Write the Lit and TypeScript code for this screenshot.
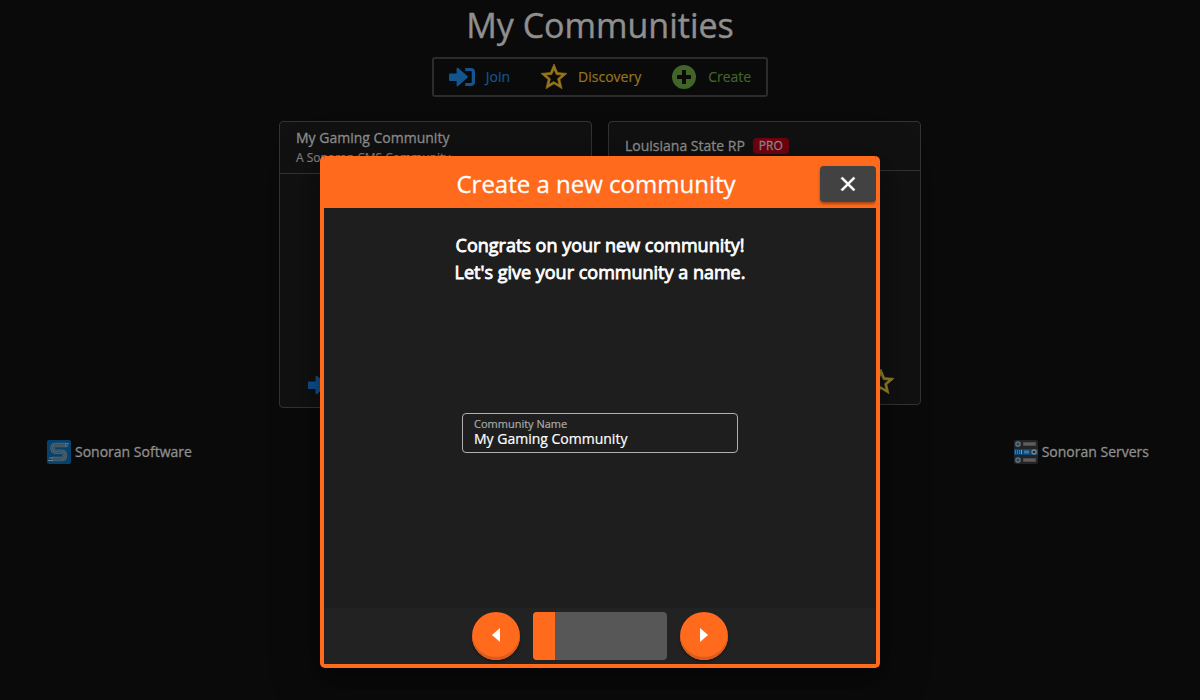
import { LitElement, html, svg, css } from "lit";
import { customElement, property, state } from "lit/decorators.js";

const STAR = "M12,15.39L8.24,17.66L9.23,13.38L5.91,10.5L10.29,10.13L12,6.09L13.71,10.13L18.09,10.5L14.77,13.38L15.76,17.66M22,9.24L14.81,8.63L12,2L9.19,8.63L2,9.24L7.45,13.97L5.82,21L12,17.27L18.18,21L16.54,13.97L22,9.24Z";
const ARROW_IN = "M11 10V5.2C11 4.4 11.9 4 12.5 4.6L21 12.7C21.5 13.2 21.5 13.9 21 14.4L12.5 22.6C11.9 23.2 11 22.8 11 22V17.5H5C4.3 17.5 4 17 4 16.5V11C4 10.4 4.4 10 5 10Z";

const icons = {
  join: svg`<svg viewBox="0 0 24 24" width="26" height="24" preserveAspectRatio="none" fill="currentColor" aria-hidden="true">
    <path transform="translate(-4 -1.6)" d=${ARROW_IN} />
    <path d="M15 3H20Q24 3 24 7V17Q24 21 20 21H15V18H20Q21 18 21 17V7Q21 6 20 6H15Z" /></svg>`,
  star: svg`<svg viewBox="2 2 20 20" width="26" height="26" fill="currentColor" stroke="currentColor" stroke-width="0.5" aria-hidden="true"><path d=${STAR} /></svg>`,
  plus: svg`<svg viewBox="0 0 24 24" width="24" height="24" fill="currentColor" aria-hidden="true">
    <path fill-rule="evenodd" d="M12 0A12 12 0 1 1 12 24A12 12 0 1 1 12 0ZM10 5V10H5V14H10V19H14V14H19V10H14V5Z" /></svg>`,
  close: svg`<svg viewBox="0 0 24 24" width="24" height="24" fill="currentColor" stroke="currentColor" stroke-width="0.6" aria-hidden="true">
    <path d="M19,6.41L17.59,5L12,10.59L6.41,5L5,6.41L10.59,12L5,17.59L6.41,19L12,13.41L17.59,19L19,17.59L13.41,12L19,6.41Z" /></svg>`,
  prev: svg`<svg viewBox="0 0 8 14" width="8" height="14" fill="currentColor" aria-hidden="true"><path d="M8 0V14L0 7Z" /></svg>`,
  next: svg`<svg viewBox="0 0 8 14" width="8" height="14" fill="currentColor" aria-hidden="true"><path d="M0 0V14L8 7Z" /></svg>`,
  software: svg`<svg viewBox="0 0 24 24" width="24" height="24" fill="none" aria-hidden="true">
    <rect width="24" height="24" rx="2" fill="#04436f" />
    <path d="M19 5H9Q5.5 5 5.5 8.2T9 11.8H14.5Q18 11.8 18 15.4T14.5 19H5" stroke="#56666f" stroke-width="4.4" />
    <path d="M19 4.2H9Q4.7 4.2 4.7 8.2T9 12.6H14.5Q17.2 12.6 17.2 15.4T14.5 18.2H5M19 6H9Q6.4 6 6.4 8.2T9 10.8H14.5Q19 10.8 19 15.4T14.5 20H5" stroke="#233f50" stroke-width=".7" />
    <path d="M18 3.8H22M18 6H21M2 18H6M1 20.5H6" stroke="#7b8286" stroke-width="1" /></svg>`,
  servers: svg`<svg viewBox="0 0 24 24" width="24" height="24" fill="none" aria-hidden="true">
    <rect width="24" height="24" rx="2" fill="#242424" />
    <rect y="9" width="24" height="6" fill="#07477a" />
    <path d="M9 4H22M9 20H22" stroke="#4c4c4c" stroke-width="4" />
    <path d="M10 4H21M10 20H21" stroke="#707070" stroke-width="1" />
    <circle cx="4" cy="4" r="2.2" fill="#075085" stroke="#707070" stroke-width="1.3" />
    <circle cx="4" cy="20" r="2.2" fill="#075085" stroke="#707070" stroke-width="1.3" />
    <path d="M1.5 10V14M3.5 10V14M5.5 10V14" stroke="#52738a" />
    <path d="M7.5 10V14" stroke="#999" />
    <path d="M10 12H15" stroke="#44799c" stroke-width="3" />
    <circle cx="20" cy="12" r="2" fill="#222" stroke="#858585" stroke-width="1.3" /></svg>`,
};

@customElement("community-card")
class CommunityCard extends LitElement {
  @property() name = "";
  @property() subtitle = "";
  @property() badge = "";

  static styles = css`
    :host { display: block; flex: 1; min-width: 0; box-sizing: border-box; border: 1px solid #333; border-radius: 4px; background: #111; }
    .head { padding: 12px 16px; border-bottom: 1px solid #333; color: #8f8f8f; }
    .head.tall { padding: 4px 16px 8px; }
    .title { display: flex; align-items: center; gap: 8px; margin: 0; font-size: 14px; line-height: 24px; font-weight: 400; -webkit-text-stroke: 0.3px; }
    .sub { margin: 0; font-size: 12px; line-height: 15px; color: #808080; -webkit-text-stroke: 0.2px; }
    .badge { padding: 0 6px; border-radius: 4px; background: #75000f; font-size: 12px; line-height: 16px; }
    .body { display: flex; flex-direction: column; justify-content: flex-end; height: 233px; padding: 0 26px 8px 24px; box-sizing: border-box; }
    .actions { display: flex; justify-content: space-between; align-items: center; }
    .act { display: flex; align-items: center; height: 28px; padding: 0; border: 0; background: none; }
    .blue { color: #0e4f8e; padding-left: 4px; }
    .gold { color: #96832a; }
  `;

  render() {
    return html`
      <header class="head ${this.subtitle ? "tall" : ""}">
        <h2 class="title">${this.name}${this.badge ? html`<span class="badge">${this.badge}</span>` : ""}</h2>
        ${this.subtitle ? html`<p class="sub">${this.subtitle}</p>` : ""}
      </header>
      <div class="body">
        <div class="actions">
          <button class="act blue" aria-label="Open community">${icons.join}</button>
          <button class="act gold" aria-label="Add to favourites">${icons.star}</button>
        </div>
      </div>`;
  }
}

@customElement("create-dialog")
class CreateDialog extends LitElement {
  @state() private step = 1;
  private steps = 6;

  static styles = css`
    :host { display: block; width: 560px; max-width: 100%; }
    .dialog { box-sizing: border-box; border: 4px solid #ff6a1c; border-top: 0; border-radius: 5px; overflow: hidden; background: #1e1e1e; color: #fff; }
    .bar { display: grid; grid-template-columns: 56px 1fr 56px; align-items: center; height: 52px; padding-top: 4px; box-sizing: border-box; background: #ff6a1c; }
    .heading { grid-column: 1 / -1; grid-row: 1; margin: 0; padding-right: 8px; text-align: center; font-size: 24px; line-height: 32px; font-weight: 400; -webkit-text-stroke: 0.3px; }
    .close { grid-column: 3; grid-row: 1; display: flex; align-items: center; justify-content: center; height: 36px; padding: 0; border: 0; border-radius: 4px; background: #424242; color: #fff; box-shadow: 0 2px 3px rgba(0, 0, 0, 0.35); }
    .content { display: flex; flex-direction: column; align-items: center; height: 400px; padding-top: 24px; box-sizing: border-box; }
    .lead { margin: 0; text-align: center; font-size: 18px; line-height: 27px; font-weight: 400; -webkit-text-stroke: 0.8px; }
    .field { display: flex; flex-direction: column; width: 276px; height: 40px; margin-top: 127px; padding: 3px 11px 0; box-sizing: border-box; border: 1px solid #b0b0b0; border-radius: 4px; }
    .label { font-size: 11px; line-height: 13px; color: #aaa; -webkit-text-stroke: 0.2px; }
    .input { width: 100%; height: 18px; padding: 0; border: 0; outline: 0; background: none; color: #fff; font: inherit; font-size: 14px; line-height: 18px; -webkit-text-stroke: 0.2px; }
    .foot { display: flex; justify-content: center; align-items: center; gap: 13px; height: 56px; background: #222; }
    .round { display: flex; align-items: center; justify-content: center; width: 48px; height: 48px; padding: 0 0 2px; box-sizing: border-box; border: 0; border-radius: 50%; background: #ff6a1c; color: #fff; box-shadow: inset 0 -3px 0 #d95d1e, 0 2px 3px rgba(0, 0, 0, 0.3); }
    .track { width: 134px; height: 48px; overflow: hidden; border-radius: 4px; background: #575757; }
    .fill { height: 100%; background: #ff6a1c; }
  `;

  private go(delta: number) {
    this.step = Math.min(this.steps, Math.max(1, this.step + delta));
  }

  render() {
    return html`
      <section class="dialog" role="dialog" aria-labelledby="dialog-title">
        <header class="bar">
          <h2 class="heading" id="dialog-title">Create a new community</h2>
          <button class="close" aria-label="Close">${icons.close}</button>
        </header>
        <div class="content">
          <p class="lead">Congrats on your new community!<br />Let's give your community a name.</p>
          <div class="field">
            <label class="label" for="name">Community Name</label>
            <input class="input" id="name" type="text" value="My Gaming Community" />
          </div>
        </div>
        <footer class="foot">
          <button class="round" aria-label="Previous" @click=${() => this.go(-1)}>${icons.prev}</button>
          <div class="track" role="progressbar" aria-label="Setup progress" aria-valuenow=${this.step} aria-valuemax=${this.steps}>
            <div class="fill" style="width: ${(this.step / this.steps) * 100}%"></div>
          </div>
          <button class="round" aria-label="Next" @click=${() => this.go(1)}>${icons.next}</button>
        </footer>
      </section>`;
  }
}

@customElement("app-root")
class AppRoot extends LitElement {
  static styles = css`
    :host { display: block; min-height: 100vh; background: #0a0a0a; font-family: "Open Sans", sans-serif; color: #8f8f8f; }
    .page { display: flex; flex-direction: column; align-items: center; padding-top: 5px; }
    .title { margin: 0; font-size: 34px; line-height: 40px; font-weight: 400; -webkit-text-stroke: 0.4px; }
    .tools { display: flex; align-items: center; gap: 31px; height: 40px; margin-top: 12px; padding: 0 15px; box-sizing: border-box; border: 2px solid #2c2c2c; border-radius: 3px; }
    .tool { display: flex; align-items: center; gap: 11px; padding: 0; border: 0; background: none; font: inherit; font-size: 14px; line-height: 18px; }
    .text { -webkit-text-stroke: 0.2px; }
    .join { color: #13558f; }
    .discovery { color: #97751a; }
    .create { color: #416427; gap: 12px; }
    .cards { display: flex; align-items: flex-start; gap: 16px; width: 642px; max-width: 100%; margin-top: 24px; }
    .links { display: flex; justify-content: space-between; align-self: stretch; margin-top: 32px; padding: 0 51px 0 47px; }
    .link { display: flex; align-items: center; gap: 4px; color: inherit; text-decoration: none; font-size: 14px; line-height: 24px; -webkit-text-stroke: 0.3px; }
    .overlay { position: absolute; inset: 0; display: flex; justify-content: center; align-items: flex-start; padding-top: 156px; }
    .modal { border-radius: 5px; box-shadow: 0 11px 15px -7px rgba(0, 0, 0, 0.4), 0 9px 46px 8px rgba(0, 0, 0, 0.24); }
  `;

  render() {
    return html`
      <main class="page">
        <h1 class="title">My Communities</h1>
        <nav class="tools">
          <button class="tool join">${icons.join}<span class="text">Join</span></button>
          <button class="tool discovery">${icons.star}<span class="text">Discovery</span></button>
          <button class="tool create">${icons.plus}<span class="text">Create</span></button>
        </nav>
        <div class="cards">
          <community-card name="My Gaming Community" subtitle="A Sonoran CMS Community"></community-card>
          <community-card name="Louisiana State RP" badge="PRO"></community-card>
        </div>
        <footer class="links">
          <a class="link" href="#software">${icons.software}Sonoran Software</a>
          <a class="link" href="#servers">${icons.servers}Sonoran Servers</a>
        </footer>
      </main>
      <div class="overlay"><create-dialog class="modal"></create-dialog></div>`;
  }
}
